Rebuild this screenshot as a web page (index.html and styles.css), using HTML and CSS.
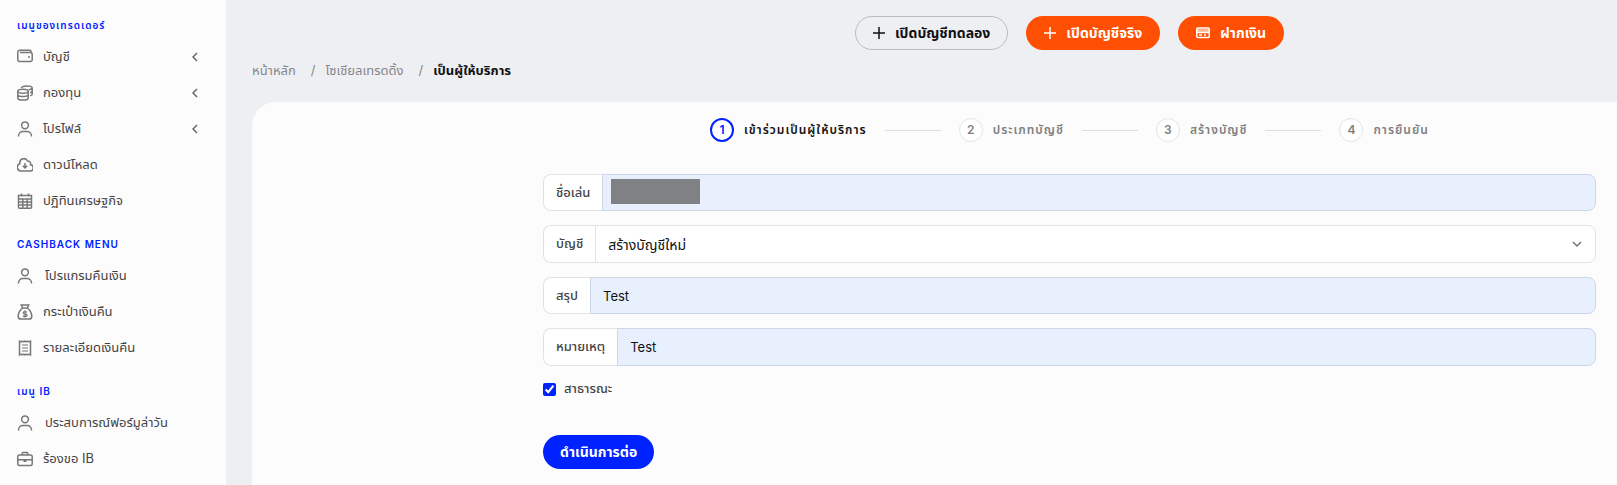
FILE: index.html
```
<!DOCTYPE html>
<html lang="th">

<head>
    <meta charset="UTF-8">
    <meta name="viewport" content="width=device-width, initial-scale=1">
    <title>เป็นผู้ให้บริการ</title>
    <link rel="stylesheet" href="styles.css">
</head>

<body>
    <svg class="sprite" aria-hidden="true">
        <symbol id="icon-user" viewBox="0 0 16 16">
            <circle cx="8" cy="4.3" r="3.4" />
            <path d="M1.500 15.600v-.6a4.500 4.500 0 0 1 4.500-4.400h4a4.500 4.500 0 0 1 4.500 4.400v.6" />
        </symbol>
        <symbol id="icon-plus" viewBox="0 0 12 12">
            <path d="M6 0v12M0 6h12" />
        </symbol>
        <symbol id="icon-left" viewBox="0 0 6 10">
            <path d="M5 1L1 5l4 4" />
        </symbol>
    </svg>

    <aside class="sidebar">
        <nav>
            <h2 class="menu-title">เมนูของเทรดเดอร์</h2>
            <ul class="menu">
                <li><a href="#">
                    <svg class="icon" viewBox="0 0 16 16"><path d="M14 3.5V2.2a1 1 0 0 0-1-1H2.6A1.8 1.8 0 0 0 .8 3v7.6a1.8 1.8 0 0 0 1.8 1.8h11a1.6 1.6 0 0 0 1.6-1.6V5.2a1.6 1.6 0 0 0-1.6-1.6H3" /><circle class="dot" cx="12" cy="8" r="1" /></svg>
                    <span>บัญชี</span>
                    <svg class="arrow"><use href="#icon-left" /></svg>
                </a></li>
                <li><a href="#">
                    <svg class="icon" viewBox="0 0 16 16"><ellipse cx="6" cy="6.3" rx="5.2" ry="2" /><path d="M.8 6.3v6.6c0 1.1 2.3 2.1 5.2 2.1s5.2-1 5.2-2.1V6.3M.8 9.6c0 1.1 2.3 2 5.2 2s5.2-.9 5.2-2M4.6 3V2.8C4.6 1.7 7 .9 9.9.9s5.3.8 5.3 1.9v6.4c0 .8-1 1.3-2 1.6M15.2 2.8c0 1-1.7 1.6-3.4 1.9M15.2 6c0 .8-1 1.4-2 1.7" /></svg>
                    <span>กองทุน</span>
                    <svg class="arrow"><use href="#icon-left" /></svg>
                </a></li>
                <li><a href="#">
                    <svg class="icon"><use href="#icon-user" /></svg>
                    <span>โปรไฟล์</span>
                    <svg class="arrow"><use href="#icon-left" /></svg>
                </a></li>
                <li><a href="#">
                    <svg class="icon" viewBox="0 0 16 16"><path d="M3.800 14h8.800a3.100 3.100 0 0 0 .9-6.200A2.900 2.900 0 0 0 10.600 4 4.100 4.100 0 0 0 2.800 5.800v1A3.700 3.700 0 0 0 3.800 14zM8 6v5M5.800 8.800L8 11l2.200-2.200" /></svg>
                    <span>ดาวน์โหลด</span>
                </a></li>
                <li><a href="#">
                    <svg class="icon" viewBox="0 0 16 16"><path d="M1.500 2.500h13v11.700a1 1 0 0 1-1 1h-11a1 1 0 0 1-1-1zM1.500 6h13M1.500 9h13M1.500 12h13M5.800 6v9M10.200 6v9M4.500.5v3M11.500.5v3" /></svg>
                    <span>ปฏิทินเศรษฐกิจ</span>
                </a></li>
            </ul>

            <h2 class="menu-title">CASHBACK MENU</h2>
            <ul class="menu">
                <li><a href="#" class="wide">
                    <svg class="icon"><use href="#icon-user" /></svg>
                    <span>โปรแกรมคืนเงิน</span>
                </a></li>
                <li><a href="#">
                    <svg class="icon" viewBox="0 0 16 16"><path d="M5.600 4L4.300.9h7.400L10.400 4zM5.600 4C3.300 6 1.200 9 1.200 12.200c0 2 1 2.900 2.700 2.900h8.200c1.700 0 2.700-.9 2.700-2.900 0-3.200-2.100-6.200-4.400-8.200" /><path class="thin" d="M10 8.400c-.4-.6-1.100-.8-2-.8-1.100 0-1.900.4-1.900 1.200 0 2 4 .7 4 2.500 0 .9-.9 1.300-2.100 1.300-1 0-1.700-.3-2.100-.9M8 6.500v7" /></svg>
                    <span>กระเป๋าเงินคืน</span>
                </a></li>
                <li><a href="#">
                    <svg class="icon" viewBox="0 0 16 16"><path d="M2.500 1.200l1.500.6 1.300-.6 1.400.6L8 1.200l1.300.6 1.400-.6 1.300.6 1.500-.6v13.600l-1.500-.6-1.300.6-1.400-.6-1.300.6-1.300-.6-1.400.6-1.300-.6-1.500.6z" /><path class="thin" d="M5 5h6M5 8h6M5 11h6" /></svg>
                    <span>รายละเอียดเงินคืน</span>
                </a></li>
            </ul>

            <h2 class="menu-title">เมนู IB</h2>
            <ul class="menu">
                <li><a href="#" class="wide">
                    <svg class="icon"><use href="#icon-user" /></svg>
                    <span>ประสบการณ์ฟอร์มูล่าวัน</span>
                </a></li>
                <li><a href="#">
                    <svg class="icon" viewBox="0 0 16 16"><rect x=".8" y="4" width="14.4" height="10.500" rx="1.500" /><path d="M5.200 4V2.500a1 1 0 0 1 1-1h3.600a1 1 0 0 1 1 1V4M.8 8.800h14.400M6.500 10.200h3" /></svg>
                    <span>ร้องขอ IB</span>
                </a></li>
            </ul>
        </nav>
    </aside>

    <main class="main">
        <div class="topbar">
            <button type="button" class="btn btn-outline">
                <svg class="plus"><use href="#icon-plus" /></svg>
                เปิดบัญชีทดลอง
            </button>
            <button type="button" class="btn btn-orange">
                <svg class="plus"><use href="#icon-plus" /></svg>
                เปิดบัญชีจริง
            </button>
            <button type="button" class="btn btn-orange">
                <svg class="card-icon" viewBox="0 0 14 12"><rect class="fade" x="1" y="2" width="12" height="3" /><rect class="line" x=".75" y="1" width="12.500" height="9.500" rx="1" /><path class="line" d="M1 5.500h12M3 8h3M8 8h2" /></svg>
                ฝากเงิน
            </button>
        </div>

        <nav class="breadcrumb">
            <a href="#">หน้าหลัก</a>
            <a href="#">โซเชียลเทรดดิ้ง</a>
            <span>เป็นผู้ให้บริการ</span>
        </nav>

        <section class="panel">
            <ol class="steps">
                <li class="active"><b>1</b><span>เข้าร่วมเป็นผู้ให้บริการ</span></li>
                <li><b>2</b><span>ประเภทบัญชี</span></li>
                <li><b>3</b><span>สร้างบัญชี</span></li>
                <li><b>4</b><span>การยืนยัน</span></li>
            </ol>

            <form class="form">
                <div class="field filled">
                    <label for="nickname">ชื่อเล่น</label>
                    <div class="control">
                        <input type="text" id="nickname">
                        <span class="mask"></span>
                    </div>
                </div>
                <div class="field">
                    <label for="account">บัญชี</label>
                    <div class="control">
                        <select id="account">
                            <option>สร้างบัญชีใหม่</option>
                        </select>
                        <svg class="caret" viewBox="0 0 10 6"><path d="M1 1l4 4 4-4" /></svg>
                    </div>
                </div>
                <div class="field filled">
                    <label for="summary">สรุป</label>
                    <div class="control">
                        <input type="text" id="summary" value="Test">
                    </div>
                </div>
                <div class="field filled">
                    <label for="remark">หมายเหตุ</label>
                    <div class="control">
                        <textarea id="remark" rows="1">Test</textarea>
                    </div>
                </div>
                <div class="check">
                    <input type="checkbox" id="public" checked>
                    <label for="public">สาธารณะ</label>
                </div>
                <button type="submit" class="btn btn-blue">ดำเนินการต่อ</button>
            </form>
        </section>
    </main>
</body>

</html>
```
FILE: styles.css
```
* {
    box-sizing: border-box;
}

body {
    margin: 0;
    min-height: 100vh;
    display: flex;
    background-color: #eeeff3;
    color: #111;
    font-family: Inter, Tahoma, "Noto Sans Thai", "Noto Sans", sans-serif;
    font-size: 13px;
}

button,
input,
select,
textarea {
    font: inherit;
    color: inherit;
}

a {
    color: inherit;
    text-decoration: none;
}

svg {
    fill: none;
    stroke: currentColor;
    flex: none;
}

.sprite {
    display: none;
}

/* sidebar */
.sidebar {
    width: 226px;
    flex: none;
    padding: 15px 28px 0 17px;
    background-color: #fcfcfc;
}

.menu-title {
    margin: 0;
    color: #0022ff;
    font-size: 10px;
    font-weight: 600;
    line-height: 20px;
    letter-spacing: 1px;
}

.menu {
    list-style: none;
    margin: 4px 0 15px;
    padding: 0;
}

.menu a {
    display: flex;
    align-items: center;
    gap: 10px;
    height: 36px;
    color: #444;
}

.menu a.wide {
    gap: 12px;
}

.icon {
    width: 16px;
    height: 16px;
    color: #777;
    stroke-width: 1.5;
}

.icon .dot {
    fill: currentColor;
    stroke: none;
}

.icon .thin {
    stroke-width: 1.2;
}

.arrow {
    width: 6px;
    height: 10px;
    margin-left: auto;
    color: #666;
    stroke-width: 1.5;
}

/* content */
.main {
    flex: 1;
    min-width: 0;
    display: flex;
    flex-direction: column;
    padding-left: 26px;
}

.topbar {
    display: flex;
    justify-content: center;
    gap: 18px;
    padding: 16px 0 8px 270px;
}

.btn {
    display: inline-flex;
    align-items: center;
    gap: 10px;
    height: 34px;
    padding: 0 17px;
    border: 1px solid transparent;
    border-radius: 17px;
    font-size: 14px;
    font-weight: 700;
    white-space: nowrap;
    cursor: pointer;
}

.btn-outline {
    background-color: transparent;
    border-color: #bbbcc2;
}

.btn-orange {
    background-color: #ff4f02;
    color: #fff;
}

.btn-blue {
    background-color: #0022ff;
    color: #fff;
    padding: 0 16px;
}

.plus {
    width: 12px;
    height: 12px;
    stroke-width: 1.5;
}

.card-icon {
    width: 14px;
    height: 12px;
}

.card-icon .line {
    stroke-width: 1.5;
}

.card-icon .fade {
    fill: #fff;
    fill-opacity: 0.6;
    stroke: none;
}

.breadcrumb {
    display: flex;
    height: 24px;
    line-height: 24px;
    margin-bottom: 20px;
    color: #85868a;
    font-size: 13px;
}

.breadcrumb a::after {
    content: "/";
    margin: 0 10px 0 15px;
}

.breadcrumb span {
    color: #111;
    font-weight: 700;
}

.panel {
    flex: 1;
    padding: 16px 21px 16px 291px;
    background-color: #fcfcfc;
    border-top-left-radius: 24px;
}

.steps {
    list-style: none;
    display: flex;
    justify-content: center;
    margin: 0 0 32px;
    padding: 0;
    color: #808080;
    font-size: 12px;
    font-weight: 600;
    letter-spacing: 1px;
    white-space: nowrap;
}

.steps li {
    display: flex;
    align-items: center;
    gap: 10px;
}

.steps li + li::before {
    content: "";
    width: 56px;
    height: 1px;
    margin: 0 8px 0 18px;
    background-color: #dedede;
}

.steps b {
    width: 24px;
    height: 24px;
    border: 1px solid #e4e4e4;
    border-radius: 50%;
    background-color: #fff;
    font-size: 12px;
    font-weight: 600;
    line-height: 22px;
    letter-spacing: 0;
    text-align: center;
}

.steps .active {
    color: #111;
}

.steps .active b {
    border: 2px solid #0022ff;
    color: #0022ff;
    line-height: 20px;
}

/* form */
.form {
    display: flex;
    flex-direction: column;
    align-items: flex-start;
    gap: 14px;
}

.field {
    display: flex;
    width: 100%;
}

.field label {
    display: flex;
    align-items: center;
    padding: 0 12px;
    background-color: #fff;
    border: 1px solid #e2e2e4;
    border-right: 0;
    border-radius: 8px 0 0 8px;
    color: #444;
    font-weight: 500;
}

.control {
    flex: 1;
    position: relative;
    display: flex;
}

.control input,
.control select,
.control textarea {
    width: 100%;
    height: 37px;
    padding: 0 12px;
    background-color: #fff;
    border: 1px solid #e2e2e4;
    border-radius: 0 8px 8px 0;
    outline: none;
    appearance: none;
}

.control select,
.control textarea {
    height: 38px;
}

.control select {
    font-size: 14px;
}

.control textarea {
    line-height: 20px;
    padding: 8px 12px;
    resize: none;
    overflow: hidden;
}

.filled input,
.filled textarea {
    background-color: #e8f0fe;
    border-color: #ccd6e8;
}

.mask {
    position: absolute;
    left: 9px;
    top: 5px;
    width: 89px;
    height: 25px;
    background-color: #808184;
}

.caret {
    position: absolute;
    right: 14px;
    top: 16px;
    width: 10px;
    height: 6px;
    color: #777;
    stroke-width: 1.5;
    pointer-events: none;
}

.check {
    display: flex;
    align-items: center;
    gap: 8px;
    height: 18px;
    margin-bottom: 23px;
    color: #444;
    font-weight: 500;
}

.check input {
    width: 13px;
    height: 13px;
    margin: 0;
    accent-color: #0022ff;
}
```
